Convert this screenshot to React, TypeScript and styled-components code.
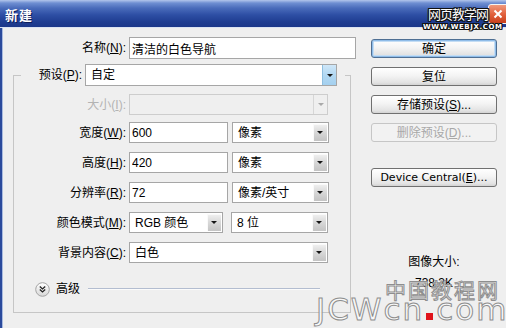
import React from "react";
import styled, { createGlobalStyle, css } from "styled-components";

const GlobalStyle = createGlobalStyle`
  html, body { margin: 0; padding: 0; background: #efefef; overflow: hidden; }
  body {
    font-family: "Liberation Sans", "Noto Sans CJK SC", sans-serif;
    font-size: 12px;
    line-height: 14px;
    color: #000;
  }
  * { box-sizing: border-box; }
`;

const Window = styled.div`
  position: relative;
  width: 506px;
  height: 328px;
  overflow: hidden;
  background: #efefef;
  display: flex;
  flex-direction: column;
`;

const TitleBar = styled.div`
  flex: none;
  height: 27px;
  padding: 3px 0 0 5px;
  display: flex;
  align-items: center;
  background: linear-gradient(
    180deg,
    #b3c6ec 0px,
    #6f8fd2 3px,
    #4a6cbb 8px,
    #2d4ea4 15px,
    #1f3d91 22px,
    #1b378a 27px
  );
`;

const TitleText = styled.span`
  color: #fff;
  font-family: "Noto Sans CJK SC", sans-serif;
  font-weight: bold;
  font-size: 13px;
  letter-spacing: 1px;
  text-shadow: 1px 1px 0 #0c1d5a;
`;

const Body = styled.div`
  flex: 1;
  display: flex;
  border-top: 1px solid #dbe3f2;
  box-shadow: inset 2px 0 0 #2b4a9c, inset 3px 0 0 #a9bbe0;
`;

const LeftColumn = styled.div`
  flex: none;
  width: 356px;
  padding: 9px 0 0 13px;
  display: flex;
  flex-direction: column;
`;

const RightColumn = styled.div`
  flex: none;
  width: 126px;
  margin-left: 15px;
  padding-top: 11px;
  display: flex;
  flex-direction: column;
`;

const Row = styled.div<{ $h?: number; $mt?: number }>`
  display: flex;
  align-items: center;
  height: ${(p) => p.$h ?? 21}px;
  margin-top: ${(p) => p.$mt ?? 0}px;
`;

const FieldLabel = styled.label<{ $w: number; $disabled?: boolean }>`
  flex: none;
  width: ${(p) => p.$w}px;
  margin-right: 3px;
  text-align: right;
  white-space: nowrap;
  color: ${(p) => (p.$disabled ? "#b3b3b3" : "#000")};
`;

const TextField = styled.input<{ $w: number; $h?: number }>`
  flex: none;
  width: ${(p) => p.$w}px;
  height: ${(p) => p.$h ?? 21}px;
  border: 1px solid #a6a6a6;
  background: #fff;
  padding: 0 2px;
  margin: 0;
  font: inherit;
  color: #000;
  outline: none;
`;

const SelectBox = styled.div<{ $w: number; $h?: number; $disabled?: boolean }>`
  flex: none;
  display: flex;
  width: ${(p) => p.$w}px;
  height: ${(p) => p.$h ?? 21}px;
  border: 1px solid ${(p) => (p.$disabled ? "#cdcdcd" : "#a6a6a6")};
  background: ${(p) => (p.$disabled ? "#efefef" : "#fff")};
`;

const SelectText = styled.span`
  flex: 1;
  display: flex;
  align-items: center;
  padding-left: 5px;
  white-space: nowrap;
  overflow: hidden;
`;

type DropVariant = "normal" | "active" | "disabled";

const DropButton = styled.span<{ $variant: DropVariant }>`
  flex: none;
  width: 14px;
  margin: 1px;
  display: flex;
  align-items: center;
  justify-content: center;
  ${(p) =>
    p.$variant === "normal" &&
    css`
      background: linear-gradient(180deg, #f2f2f2 0%, #dadada 45%, #c4c4c4 100%);
      box-shadow: inset 1px 1px 0 #fafafa;
    `}
  ${(p) =>
    p.$variant === "active" &&
    css`
      margin: 0;
      background: linear-gradient(180deg, #cfe7f8 0%, #b2d8f2 50%, #a4d0ef 100%);
      border-left: 1px solid #8fbfe0;
    `}
  ${(p) =>
    p.$variant === "disabled" &&
    css`
      margin: 0;
      border-left: 1px solid #d6d6d6;
      background: transparent;
    `}
`;

const Arrow = styled.span<{ $disabled?: boolean }>`
  width: 0;
  height: 0;
  border-left: 3px solid transparent;
  border-right: 3px solid transparent;
  border-top: 3px solid ${(p) => (p.$disabled ? "#a9a9a9" : "#161616")};
`;

const GroupBox = styled.fieldset`
  width: 338px;
  margin: 7px 0 0 0;
  padding: 0 0 15px 0;
  border: 1px solid #c6c6c6;
  min-width: 0;
`;

const GroupLegend = styled.legend`
  margin-left: 7px;
  padding: 0 8px 0 0;
  height: 18px;
`;

const LegendRow = styled.div`
  display: flex;
  align-items: center;
  height: 22px;
  margin-top: -2px;
`;

const Rows = styled.div`
  padding-top: 10px;
  display: flex;
  flex-direction: column;
`;

const Controls = styled.div<{ $gap: number }>`
  display: flex;
  gap: ${(p) => p.$gap}px;
`;

const AdvancedRow = styled.div`
  display: flex;
  align-items: center;
  height: 16px;
  margin-top: 18px;
  padding-left: 21px;
`;

const AdvancedText = styled.span`
  margin-left: 6px;
`;

const Rule = styled.span`
  width: 232px;
  height: 2px;
  margin-left: 8px;
  border-top: 1px solid #b3bdd0;
  border-bottom: 1px solid #fbfbfb;
`;

const Button = styled.button<{ $primary?: boolean; $mt?: number }>`
  width: 126px;
  height: 19px;
  margin: ${(p) => p.$mt ?? 0}px 0 0 0;
  padding: 0;
  font: inherit;
  line-height: 14px;
  color: #000;
  border: 1px solid #707070;
  border-radius: 3px;
  background: linear-gradient(180deg, #ffffff 0%, #f4f4f4 45%, #e3e3e3 85%, #d3d3d3 100%);
  ${(p) =>
    p.$primary &&
    css`
      border-color: #4f6f93;
      box-shadow: inset 0 0 0 1px #8fbce8, inset 0 0 0 2px #c4ddf4;
    `}
  &:disabled {
    color: #a8a8a8;
    border-color: #c6c6c6;
    background: #f2f2f2;
  }
`;

const LatinButton = styled(Button)`
  font-family: "DejaVu Sans", sans-serif;
  font-size: 11px;
`;

const InfoBlock = styled.div`
  margin-top: 68px;
  text-align: center;
  display: flex;
  flex-direction: column;
  gap: 7px;
`;

const CloseBox = styled.span`
  position: absolute;
  top: 4px;
  right: -4px;
  width: 22px;
  height: 20px;
  border: 1px solid #f4f4f4;
  border-radius: 3px;
  background: linear-gradient(180deg, #f09a7e 0%, #e2623e 50%, #c9401c 100%);
  display: flex;
  align-items: center;
  justify-content: center;
  padding-right: 3px;
`;

const outline = (c: string) =>
  `-1px -1px 0 ${c}, 1px -1px 0 ${c}, -1px 1px 0 ${c}, 1px 1px 0 ${c}, 0 1px 0 ${c}, 0 -1px 0 ${c}, 1px 0 0 ${c}, -1px 0 0 ${c}`;

const TopMark = styled.span`
  position: absolute;
  left: 428px;
  top: 6px;
  font-family: "Noto Sans CJK SC", sans-serif;
  font-size: 13px;
  line-height: 16px;
  color: #fff;
  letter-spacing: -1px;
  text-shadow: ${outline("#111")};
`;

const TopMarkUrl = styled.span`
  position: absolute;
  left: 423px;
  top: 23px;
  font-family: "DejaVu Sans", sans-serif;
  font-weight: bold;
  font-size: 7px;
  line-height: 9px;
  letter-spacing: 0.6px;
  color: #fff;
  text-shadow: ${outline("#111")};
`;

const BottomMarkCn = styled.span`
  position: absolute;
  left: 385px;
  top: 277px;
  font-family: "Noto Sans CJK SC", sans-serif;
  font-size: 21px;
  line-height: 24px;
  letter-spacing: 2px;
  color: rgba(250, 250, 250, 0.85);
  -webkit-text-stroke: 1px #8e8e8e;
`;

const BottomMarkEn = styled.span`
  position: absolute;
  left: 316px;
  top: 292px;
  font-family: "DejaVu Sans", sans-serif;
  font-size: 31px;
  line-height: 34px;
  letter-spacing: 2px;
  color: rgba(250, 250, 250, 0.9);
  -webkit-text-stroke: 1px #8e8e8e;
  display: flex;
  align-items: baseline;
`;

const RedDot = styled.span`
  display: inline-block;
  width: 7px;
  height: 7px;
  margin: 0 3px 0 2px;
  background: #e0141c;
`;

function Select({
  w,
  h,
  value,
  variant = "normal",
}: {
  w: number;
  h?: number;
  value: string;
  variant?: DropVariant;
}) {
  return (
    <SelectBox $w={w} $h={h} $disabled={variant === "disabled"}>
      <SelectText>{value}</SelectText>
      <DropButton $variant={variant}>
        <Arrow $disabled={variant === "disabled"} />
      </DropButton>
    </SelectBox>
  );
}

function AdvancedIcon() {
  return (
    <svg width="15" height="15" viewBox="0 0 15 15">
      <defs>
        <linearGradient id="advGrad" x1="0" y1="0" x2="0" y2="1">
          <stop offset="0" stopColor="#ffffff" />
          <stop offset="1" stopColor="#d6d6d6" />
        </linearGradient>
      </defs>
      <circle cx="7.5" cy="7.5" r="6.8" fill="url(#advGrad)" stroke="#a3a3a3" />
      <path
        d="M4.8 4.6 L7.5 7 L10.2 4.6 M4.8 7.6 L7.5 10 L10.2 7.6"
        fill="none"
        stroke="#222"
        strokeWidth="1.3"
      />
    </svg>
  );
}

function CloseIcon() {
  return (
    <svg width="10" height="10" viewBox="0 0 10 10">
      <path d="M1.5 1.5 L8.5 8.5 M8.5 1.5 L1.5 8.5" stroke="#fff" strokeWidth="2" />
    </svg>
  );
}

export default function App() {
  return (
    <Window>
      <GlobalStyle />
      <TitleBar>
        <TitleText>新建</TitleText>
      </TitleBar>
      <Body>
        <LeftColumn>
          <Row $h={22}>
            <FieldLabel $w={113}>
              名称(<u>N</u>):
            </FieldLabel>
            <TextField $w={227} $h={22} readOnly value="清洁的白色导航" />
          </Row>
          <GroupBox>
            <GroupLegend>
              <LegendRow>
                <FieldLabel $w={61}>
                  预设(<u>P</u>):
                </FieldLabel>
                <Select w={252} h={22} value="自定" variant="active" />
              </LegendRow>
            </GroupLegend>
            <Rows>
              <Row>
                <FieldLabel $w={112} $disabled>
                  大小(<u>I</u>):
                </FieldLabel>
                <Select w={199} value="" variant="disabled" />
              </Row>
              <Row $mt={7}>
                <FieldLabel $w={112}>
                  宽度(<u>W</u>):
                </FieldLabel>
                <Controls $gap={4}>
                  <TextField $w={99} readOnly value="600" />
                  <Select w={97} value="像素" />
                </Controls>
              </Row>
              <Row $mt={9}>
                <FieldLabel $w={112}>
                  高度(<u>H</u>):
                </FieldLabel>
                <Controls $gap={4}>
                  <TextField $w={99} readOnly value="420" />
                  <Select w={97} value="像素" />
                </Controls>
              </Row>
              <Row $mt={9}>
                <FieldLabel $w={112}>
                  分辨率(<u>R</u>):
                </FieldLabel>
                <Controls $gap={4}>
                  <TextField $w={99} readOnly value="72" />
                  <Select w={97} value="像素/英寸" />
                </Controls>
              </Row>
              <Row $mt={9}>
                <FieldLabel $w={112}>
                  颜色模式(<u>M</u>):
                </FieldLabel>
                <Controls $gap={8}>
                  <Select w={94} value="RGB 颜色" />
                  <Select w={97} value="8 位" />
                </Controls>
              </Row>
              <Row $mt={9}>
                <FieldLabel $w={112}>
                  背景内容(<u>C</u>):
                </FieldLabel>
                <Select w={199} value="白色" />
              </Row>
            </Rows>
            <AdvancedRow>
              <AdvancedIcon />
              <AdvancedText>高级</AdvancedText>
              <Rule />
            </AdvancedRow>
          </GroupBox>
        </LeftColumn>
        <RightColumn>
          <Button $primary>确定</Button>
          <Button $mt={9}>复位</Button>
          <Button $mt={9}>
            存储预设(<u>S</u>)...
          </Button>
          <Button $mt={9} disabled>
            删除预设(<u>D</u>)...
          </Button>
          <LatinButton $mt={26}>
            Device Central(<u>E</u>)...
          </LatinButton>
          <InfoBlock>
            <span>图像大小:</span>
            <span>738.3K</span>
          </InfoBlock>
        </RightColumn>
      </Body>
      <CloseBox>
        <CloseIcon />
      </CloseBox>
      <TopMark>网页教学网</TopMark>
      <TopMarkUrl>WWW.WEBJX.COM</TopMarkUrl>
      <BottomMarkCn>中国教程网</BottomMarkCn>
      <BottomMarkEn>
        JCWcn<RedDot />com
      </BottomMarkEn>
    </Window>
  );
}
